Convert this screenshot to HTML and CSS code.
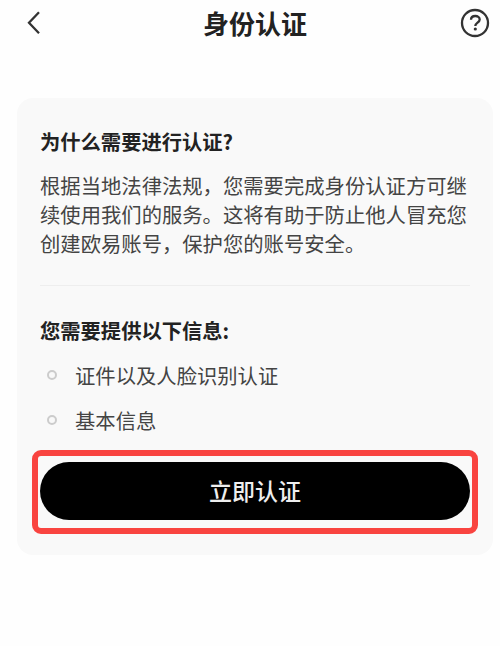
FILE: index.html
```html
<!DOCTYPE html>
<html lang="zh-CN">
<head>
  <meta charset="UTF-8" />
  <meta name="viewport" content="width=device-width, initial-scale=1.0"/>
  <title>身份认证</title>
  <link rel="stylesheet" href="styles.css">
</head>
<body>
  <header class="header">
    <svg class="back" viewBox="0 0 16 26" aria-label="返回">
      <path d="M13 2.3 L3 12.8 L13 23.3" />
    </svg>
    <h1>身份认证</h1>
    <svg class="help" viewBox="0 0 30 30" aria-label="帮助">
      <circle cx="15" cy="15" r="13" />
      <path d="M11 11.8 C11 6.8 19.7 6.8 19.7 11.5 C19.7 14.5 15.3 14.8 15.3 18" />
      <circle class="dot" cx="15.3" cy="21" r="1.6" />
    </svg>
  </header>

  <main class="card">
    <h2>为什么需要进行认证?</h2>
    <p class="explanation">根据当地法律法规，您需要完成身份认证方可继<br>续使用我们的服务。这将有助于防止他人冒充您<br>创建欧易账号，保护您的账号安全。</p>

    <hr class="divider">

    <h2>您需要提供以下信息:</h2>
    <ul class="items">
      <li>证件以及人脸识别认证</li>
      <li>基本信息</li>
    </ul>

    <div class="highlight">
      <button class="verify" type="button">立即认证</button>
    </div>
  </main>
</body>
</html>
```
FILE: styles.css
```css
*,
*::before {
  box-sizing: border-box;
}

body {
  font-family: "Noto Sans CJK SC", sans-serif;
  margin: 0;
  background: #fefefe;
  color: #222;
}

.header {
  display: flex;
  justify-content: space-between;
  align-items: center;
  height: 46px;
  padding: 0 10px 0 26px;
}

.header svg {
  fill: none;
  stroke: #333;
  stroke-width: 2.3;
}

.header .back {
  width: 16px;
  height: 26px;
}

.header .help {
  width: 30px;
  height: 30px;
}

.header .dot {
  fill: #333;
  stroke: none;
}

h1 {
  margin: 0 0 1px 8px;
  font-size: 26px;
  line-height: 45px;
  font-weight: bold;
}

.card {
  margin: 52px 7px 0 17px;
  height: 457px;
  padding: 29px 23px 0;
  background: #f9f9f9;
  border-radius: 16px;
}

h2 {
  margin: 0;
  font-size: 20.3px;
  line-height: 28px;
  font-weight: bold;
}

.explanation {
  margin: 16px 0 0;
  font-size: 20.33px;
  line-height: 29px;
  color: #444;
  white-space: nowrap;
}

.divider {
  margin: 27px 0 30px;
  border: 0;
  border-top: 1px solid #eee;
}

.items {
  margin: 9px 0 0;
  padding: 0;
  list-style: none;
  font-size: 20.33px;
  line-height: 44.5px;
  color: #444;
}

.items li {
  display: flex;
  align-items: center;
}

.items li::before {
  content: "";
  width: 10px;
  height: 10px;
  margin: 0 18px 0 7px;
  border: 2px solid #ccc;
  border-radius: 50%;
}

.highlight {
  margin: 8px -8px 0;
  padding: 6px 2px 8px;
  border: 6px solid #f94440;
  border-radius: 9px;
}

.verify {
  display: block;
  width: 100%;
  height: 58px;
  padding: 0 0 2px;
  border: 0;
  border-radius: 29px;
  background: #000;
  color: #eee;
  font-family: inherit;
  font-size: 23px;
  font-weight: 500;
}
```
